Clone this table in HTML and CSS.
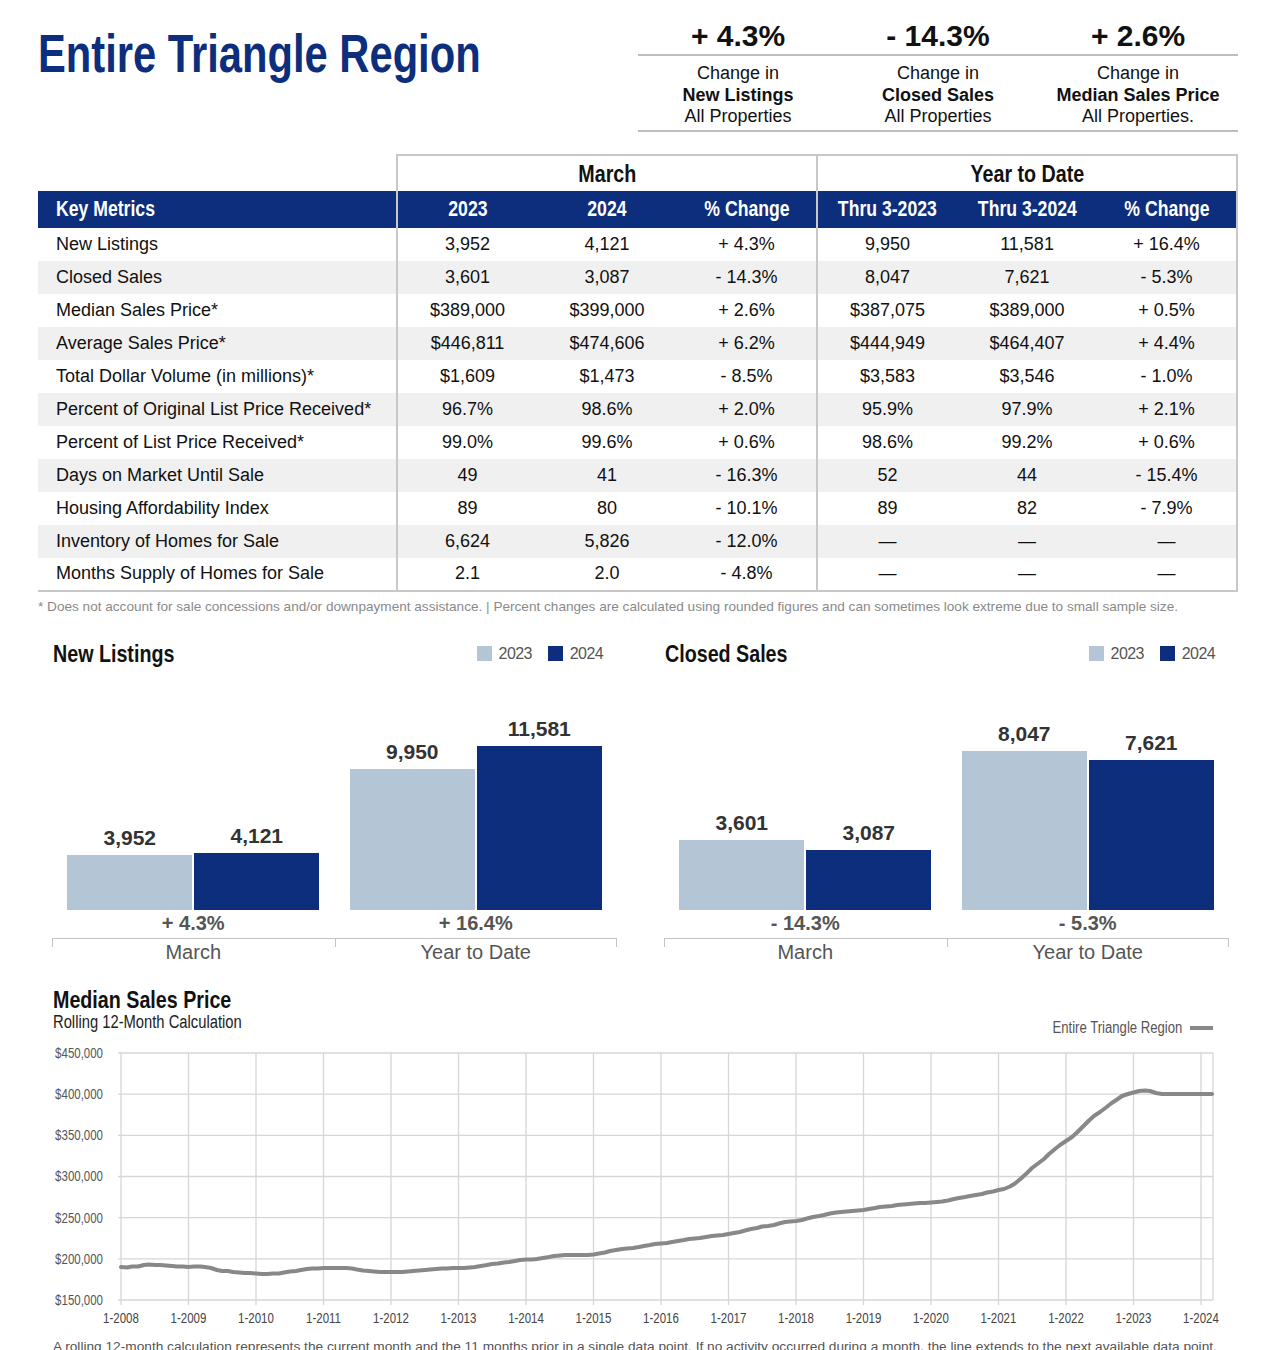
FILE: index.html
```html
<!DOCTYPE html>
<html lang="en">
<head>
<meta charset="utf-8">
<title>Entire Triangle Region</title>
<link rel="stylesheet" href="styles.css">
</head>
<body>
<div class="page">
  <header class="top">
    <h1 class="title"><span class="n nl">Entire Triangle Region</span></h1>
    <div class="stats">
      <div class="stat">
        <div class="stat-val">+ 4.3%</div>
        <div class="stat-lbl">Change in<br><b>New Listings</b><br>All Properties</div>
      </div>
      <div class="stat">
        <div class="stat-val">- 14.3%</div>
        <div class="stat-lbl">Change in<br><b>Closed Sales</b><br>All Properties</div>
      </div>
      <div class="stat">
        <div class="stat-val">+ 2.6%</div>
        <div class="stat-lbl">Change in<br><b>Median Sales Price</b><br>All Properties.</div>
      </div>
    </div>
  </header>

  <table class="metrics">
    <colgroup><col class="c-name"><col><col><col><col><col><col></colgroup>
    <thead>
      <tr class="group-row">
        <th class="blank"></th>
        <th colspan="3" class="grp"><span class="n">March</span></th>
        <th colspan="3" class="grp"><span class="n">Year to Date</span></th>
      </tr>
      <tr class="head-row">
        <th class="name"><span class="n nl">Key Metrics</span></th>
        <th class="first"><span class="n">2023</span></th><th><span class="n">2024</span></th><th><span class="n">% Change</span></th>
        <th class="first"><span class="n">Thru 3-2023</span></th><th><span class="n">Thru 3-2024</span></th><th class="last"><span class="n">% Change</span></th>
      </tr>
    </thead>
    <tbody>
      <tr><td class="name">New Listings</td><td class="first">3,952</td><td>4,121</td><td>+ 4.3%</td><td class="first">9,950</td><td>11,581</td><td class="last">+ 16.4%</td></tr>
      <tr><td class="name">Closed Sales</td><td class="first">3,601</td><td>3,087</td><td>- 14.3%</td><td class="first">8,047</td><td>7,621</td><td class="last">- 5.3%</td></tr>
      <tr><td class="name">Median Sales Price*</td><td class="first">$389,000</td><td>$399,000</td><td>+ 2.6%</td><td class="first">$387,075</td><td>$389,000</td><td class="last">+ 0.5%</td></tr>
      <tr><td class="name">Average Sales Price*</td><td class="first">$446,811</td><td>$474,606</td><td>+ 6.2%</td><td class="first">$444,949</td><td>$464,407</td><td class="last">+ 4.4%</td></tr>
      <tr><td class="name">Total Dollar Volume (in millions)*</td><td class="first">$1,609</td><td>$1,473</td><td>- 8.5%</td><td class="first">$3,583</td><td>$3,546</td><td class="last">- 1.0%</td></tr>
      <tr><td class="name">Percent of Original List Price Received*</td><td class="first">96.7%</td><td>98.6%</td><td>+ 2.0%</td><td class="first">95.9%</td><td>97.9%</td><td class="last">+ 2.1%</td></tr>
      <tr><td class="name">Percent of List Price Received*</td><td class="first">99.0%</td><td>99.6%</td><td>+ 0.6%</td><td class="first">98.6%</td><td>99.2%</td><td class="last">+ 0.6%</td></tr>
      <tr><td class="name">Days on Market Until Sale</td><td class="first">49</td><td>41</td><td>- 16.3%</td><td class="first">52</td><td>44</td><td class="last">- 15.4%</td></tr>
      <tr><td class="name">Housing Affordability Index</td><td class="first">89</td><td>80</td><td>- 10.1%</td><td class="first">89</td><td>82</td><td class="last">- 7.9%</td></tr>
      <tr><td class="name">Inventory of Homes for Sale</td><td class="first">6,624</td><td>5,826</td><td>- 12.0%</td><td class="first">—</td><td>—</td><td class="last">—</td></tr>
      <tr><td class="name">Months Supply of Homes for Sale</td><td class="first">2.1</td><td>2.0</td><td>- 4.8%</td><td class="first">—</td><td>—</td><td class="last">—</td></tr>
    </tbody>
  </table>
  <p class="footnote">* Does not account for sale concessions and/or downpayment assistance. | Percent changes are calculated using rounded figures and can sometimes look extreme due to small sample size.</p>

  <section class="charts">
    <div class="bar-chart">
      <div class="chart-head">
        <h2 class="chart-title"><span class="n nl">New Listings</span></h2>
        <div class="legend"><span class="sw light"></span><span class="lg">2023</span><span class="sw dark"></span><span class="lg">2024</span></div>
      </div>
      <div class="plot">
        <div class="group">
          <div class="bar-col"><div class="val">3,952</div><div class="bar light" style="height:55px"></div></div>
          <div class="bar-col"><div class="val">4,121</div><div class="bar dark" style="height:57px"></div></div>
        </div>
        <div class="group">
          <div class="bar-col"><div class="val">9,950</div><div class="bar light" style="height:141px"></div></div>
          <div class="bar-col"><div class="val">11,581</div><div class="bar dark" style="height:164px"></div></div>
        </div>
      </div>
      <div class="changes"><div>+ 4.3%</div><div>+ 16.4%</div></div>
      <div class="axis"><div class="cat">March</div><div class="cat">Year to Date</div></div>
    </div>
    <div class="bar-chart">
      <div class="chart-head">
        <h2 class="chart-title"><span class="n nl">Closed Sales</span></h2>
        <div class="legend"><span class="sw light"></span><span class="lg">2023</span><span class="sw dark"></span><span class="lg">2024</span></div>
      </div>
      <div class="plot">
        <div class="group">
          <div class="bar-col"><div class="val">3,601</div><div class="bar light" style="height:70px"></div></div>
          <div class="bar-col"><div class="val">3,087</div><div class="bar dark" style="height:60px"></div></div>
        </div>
        <div class="group">
          <div class="bar-col"><div class="val">8,047</div><div class="bar light" style="height:159px"></div></div>
          <div class="bar-col"><div class="val">7,621</div><div class="bar dark" style="height:150px"></div></div>
        </div>
      </div>
      <div class="changes"><div>- 14.3%</div><div>- 5.3%</div></div>
      <div class="axis"><div class="cat">March</div><div class="cat">Year to Date</div></div>
    </div>
  </section>

  <section class="line-chart">
    <div class="line-head">
      <div>
        <h2 class="chart-title"><span class="n nl">Median Sales Price</span></h2>
        <div class="subtitle"><span class="n nl">Rolling 12-Month Calculation</span></div>
      </div>
      <div class="line-legend"><span class="n nr">Entire Triangle Region</span><span class="ln"></span></div>
    </div>
    <svg class="line-svg" width="1200" height="300" viewBox="38 1031 1200 300">
      <g class="grid">
        <line x1="118" y1="1053" x2="1213" y2="1053"/>
        <line x1="118" y1="1094.2" x2="1213" y2="1094.2"/>
        <line x1="118" y1="1135.3" x2="1213" y2="1135.3"/>
        <line x1="118" y1="1176.5" x2="1213" y2="1176.5"/>
        <line x1="118" y1="1217.7" x2="1213" y2="1217.7"/>
        <line x1="118" y1="1258.8" x2="1213" y2="1258.8"/>
        <line x1="118" y1="1300" x2="1213" y2="1300"/>
        <line x1="121" y1="1053" x2="121" y2="1305"/>
        <line x1="188.5" y1="1053" x2="188.5" y2="1305"/>
        <line x1="256" y1="1053" x2="256" y2="1305"/>
        <line x1="323.5" y1="1053" x2="323.5" y2="1305"/>
        <line x1="391" y1="1053" x2="391" y2="1305"/>
        <line x1="458.5" y1="1053" x2="458.5" y2="1305"/>
        <line x1="526" y1="1053" x2="526" y2="1305"/>
        <line x1="593.5" y1="1053" x2="593.5" y2="1305"/>
        <line x1="661" y1="1053" x2="661" y2="1305"/>
        <line x1="728.5" y1="1053" x2="728.5" y2="1305"/>
        <line x1="796" y1="1053" x2="796" y2="1305"/>
        <line x1="863.5" y1="1053" x2="863.5" y2="1305"/>
        <line x1="931" y1="1053" x2="931" y2="1305"/>
        <line x1="998.5" y1="1053" x2="998.5" y2="1305"/>
        <line x1="1066" y1="1053" x2="1066" y2="1305"/>
        <line x1="1133.5" y1="1053" x2="1133.5" y2="1305"/>
        <line x1="1201" y1="1053" x2="1201" y2="1305"/>
        <line x1="1213" y1="1053" x2="1213" y2="1300"/>
      </g>
      <g class="ylabels">
        <text x="103" y="1058">$450,000</text>
        <text x="103" y="1099.2">$400,000</text>
        <text x="103" y="1140.3">$350,000</text>
        <text x="103" y="1181.5">$300,000</text>
        <text x="103" y="1222.7">$250,000</text>
        <text x="103" y="1263.8">$200,000</text>
        <text x="103" y="1305">$150,000</text>
      </g>
      <g class="xlabels">
        <text x="121" y="1323">1-2008</text>
        <text x="188.5" y="1323">1-2009</text>
        <text x="256" y="1323">1-2010</text>
        <text x="323.5" y="1323">1-2011</text>
        <text x="391" y="1323">1-2012</text>
        <text x="458.5" y="1323">1-2013</text>
        <text x="526" y="1323">1-2014</text>
        <text x="593.5" y="1323">1-2015</text>
        <text x="661" y="1323">1-2016</text>
        <text x="728.5" y="1323">1-2017</text>
        <text x="796" y="1323">1-2018</text>
        <text x="863.5" y="1323">1-2019</text>
        <text x="931" y="1323">1-2020</text>
        <text x="998.5" y="1323">1-2021</text>
        <text x="1066" y="1323">1-2022</text>
        <text x="1133.5" y="1323">1-2023</text>
        <text x="1201" y="1323">1-2024</text>
      </g>
      <polyline class="trend" points="121,1267 127,1267.5 132,1266.5 138,1266.5 144,1265 149,1264.5 155,1265 160,1265 166,1265.5 172,1266 177,1266.5 183,1266.5 188.5,1267 194,1266.5 200,1266.5 205,1267 211,1268 217,1270 222,1271 228,1271 233,1272 239,1272.5 245,1273 250,1273 256,1273.5 262,1274 267,1274 273,1273.5 279,1273.5 284,1272.5 290,1271.5 296,1271 301,1270 307,1269 312,1268.5 318,1268.5 323.5,1268 329,1268 335,1268 340,1268 346,1268 352,1268.5 357,1269.5 363,1270.5 369,1271 374,1271.5 380,1272 385,1272 391,1272 397,1272 402,1272 408,1271.5 413,1271 419,1270.5 425,1270 430,1269.5 436,1269 442,1268.5 447,1268.5 453,1268 458.5,1268 464,1268 470,1267.5 475,1267 481,1266 487,1265 492,1264 498,1263.5 504,1262.5 509,1262 515,1261 520,1260 526,1259.5 532,1259.5 537,1259 543,1258 549,1257 554,1256 560,1255.5 565,1255 571,1255 577,1255 582,1255 588,1255 593.5,1254.5 599,1253.5 605,1252.5 610,1251 616,1250 622,1249 627,1248.5 633,1248 639,1247 644,1246 650,1245 655,1244 661,1243.5 667,1243 672,1242 678,1241 684,1240 689,1239 695,1238.5 700,1238 706,1237 712,1236 717,1235.5 723,1235 728.5,1234 734,1233 740,1232 745,1230.5 751,1229 757,1228 762,1226.5 768,1226 774,1225 779,1223.5 785,1222 790,1221.5 796,1221 802,1220 807,1218.5 813,1217 819,1216 824,1215 830,1213.5 836,1212.5 841,1212 847,1211.5 852,1211 858,1210.5 863.5,1210 869,1209 875,1208 880,1207 886,1206.5 892,1206 897,1205 903,1204.5 909,1204 914,1203.5 920,1203 925,1203 931,1202.5 937,1202 942,1201.5 948,1200.5 954,1199 959,1198 965,1197 970,1196 976,1195 982,1194 987,1192.5 993,1191.5 998.5,1190 1004,1189 1010,1186.5 1015,1183.5 1021,1178.5 1027,1173 1032,1168 1038,1163.5 1044,1159 1049,1154 1055,1149 1060,1145 1066,1141 1072,1137 1077,1132.5 1083,1126.5 1089,1120.5 1094,1116 1100,1112 1106,1107.5 1111,1103.5 1117,1099.5 1122,1096 1128,1094 1133.5,1092.5 1139,1091 1145,1090.5 1150,1091 1156,1093 1162,1094 1167,1094 1173,1094 1179,1094 1184,1094 1190,1094 1196,1094 1201,1094 1207,1094 1212,1094"/>
    </svg>
    <p class="line-note">A rolling 12-month calculation represents the current month and the 11 months prior in a single data point. If no activity occurred during a month, the line extends to the next available data point.</p>
  </section>
</div>
</body>
</html>
```
FILE: styles.css
```css
* { box-sizing: border-box; }
html, body { margin: 0; padding: 0; background: #fff; }
body {
  font-family: "Liberation Sans", Arial, sans-serif;
  color: #111;
  width: 1275px;
}
.page {
  width: 1200px;
  margin-left: 38px;
  padding-top: 18px;
}

/* narrow (condensed) text: Arial-metric face squeezed horizontally */
.n {
  display: inline-block;
  white-space: nowrap;
  transform: scaleX(0.82);
  transform-origin: center center;
}
.n.nl { transform-origin: left center; }
.n.nr { transform-origin: right center; }

/* header */
.top {
  display: flex;
  justify-content: space-between;
  align-items: flex-start;
}
.title {
  margin: 6px 0 0 0;
  font-size: 53px;
  line-height: 60px;
  font-weight: bold;
  color: #0c2e7c;
  white-space: nowrap;
}
.title .n { transform: scaleX(0.787); }
.stats {
  width: 600px;
  flex: none;
  display: flex;
  border-bottom: 2px solid #bdbdbd;
}
.stat { flex: 1; text-align: center; }
.stat-val {
  font-size: 30px;
  font-weight: bold;
  line-height: 36px;
  height: 38px;
  border-bottom: 2px solid #bdbdbd;
}
.stat-lbl {
  font-size: 18px;
  line-height: 21.5px;
  padding: 7px 0 2px;
  color: #111;
}

/* table */
.metrics {
  margin-top: 22px;
  width: 1200px;
  border-collapse: collapse;
  table-layout: fixed;
}
.metrics col { width: 140px; }
.metrics col.c-name { width: 359px; }
.group-row th {
  height: 36px;
  font-size: 24px;
  font-weight: bold;
  color: #111;
  padding: 1px 0 0;
  vertical-align: middle;
}
.group-row th.grp {
  border-top: 2px solid #c8c8c8;
  border-left: 2px solid #c8c8c8;
  border-right: 2px solid #c8c8c8;
}
.head-row th {
  background: #0c2e7c;
  color: #fff;
  height: 37px;
  font-size: 21.5px;
  font-weight: bold;
  padding: 1px 0 0;
  text-align: center;
}
.head-row th.name { text-align: left; padding-left: 18px; }
.metrics td {
  height: 33px;
  font-size: 18px;
  text-align: center;
  padding: 0;
  color: #111;
}
.metrics td.name { text-align: left; padding-left: 18px; }
.metrics .first { border-left: 2px solid #c8c8c8; }
.metrics .last { border-right: 2px solid #c8c8c8; }
.metrics tbody tr:nth-child(even) td { background: #f0f0f0; }
.metrics tbody tr:last-child td { border-bottom: 2px solid #c8c8c8; }

.footnote {
  margin: 7px 0 0 0;
  font-size: 13.6px;
  color: #8a8a8a;
  line-height: 16px;
  white-space: nowrap;
}

/* bar charts */
.charts {
  display: flex;
  gap: 47px;
  margin: 24px 0 0 14px;
}
.bar-chart { width: 565px; }
.chart-head {
  display: flex;
  justify-content: space-between;
  align-items: center;
  padding: 0 14px 0 1px;
  height: 30px;
}
.chart-title {
  margin: 0;
  font-size: 24px;
  line-height: 26px;
  font-weight: bold;
  color: #111;
  white-space: nowrap;
}
.legend {
  display: flex;
  align-items: center;
  font-size: 16px;
  color: #555;
}
.lg { letter-spacing: -0.6px; }
.sw {
  width: 15px;
  height: 15px;
  display: inline-block;
  margin-right: 7px;
}
.sw.dark { margin-left: 16px; }
.light { background: #b4c5d6; }
.dark { background: #0c2e7c; }

.plot {
  height: 241px;
  display: flex;
}
.group {
  flex: 1;
  display: flex;
  justify-content: center;
  align-items: flex-end;
  gap: 2px;
}
.bar-col {
  width: 125px;
  display: flex;
  flex-direction: column;
  align-items: center;
}
.val {
  font-size: 21px;
  font-weight: bold;
  color: #333;
  line-height: 24px;
  margin-bottom: 5px;
}
.bar { width: 125px; }

.changes {
  display: flex;
  height: 28px;
  align-items: center;
}
.changes div {
  flex: 1;
  text-align: center;
  font-size: 20px;
  font-weight: bold;
  color: #555;
}
.axis {
  display: flex;
  border-top: 1px solid #c4c4c4;
}
.cat {
  flex: 1;
  position: relative;
  text-align: center;
  font-size: 20px;
  color: #555;
  line-height: 26px;
}
.cat::before {
  content: "";
  position: absolute;
  left: 0;
  top: 0;
  height: 8px;
  border-left: 1px solid #c4c4c4;
}
.cat:last-child::after {
  content: "";
  position: absolute;
  right: 0;
  top: 0;
  height: 8px;
  border-left: 1px solid #c4c4c4;
}

/* line chart */
.line-chart { margin-top: 22px; }
.line-head {
  display: flex;
  justify-content: space-between;
  align-items: flex-end;
  padding: 0 25px 0 15px;
}
.line-head .chart-title { line-height: 26px; }
.subtitle {
  font-size: 18px;
  line-height: 18px;
  color: #222;
  white-space: nowrap;
}
.line-legend {
  display: flex;
  align-items: center;
  font-size: 16px;
  line-height: 18px;
  color: #555;
  margin-bottom: -6px;
}
.ln {
  display: inline-block;
  width: 23px;
  height: 4px;
  background: #888;
  margin-left: 8px;
}
.line-svg { display: block; }
.grid line { stroke: #d6d6d6; stroke-width: 1.3; }
.ylabels text, .xlabels text {
  font-family: "Liberation Sans", Arial, sans-serif;
  font-size: 14px;
  transform-box: fill-box;
  transform: scaleX(0.82);
}
.ylabels text {
  fill: #555;
  text-anchor: end;
  transform-origin: right center;
}
.xlabels text {
  fill: #444;
  text-anchor: middle;
  transform-origin: center center;
}
.trend {
  fill: none;
  stroke: #888;
  stroke-width: 4;
  stroke-linejoin: round;
  stroke-linecap: round;
}
.line-note {
  margin: 8px 0 0 15px;
  font-size: 13.7px;
  line-height: 16px;
  color: #555;
  white-space: nowrap;
}
```
